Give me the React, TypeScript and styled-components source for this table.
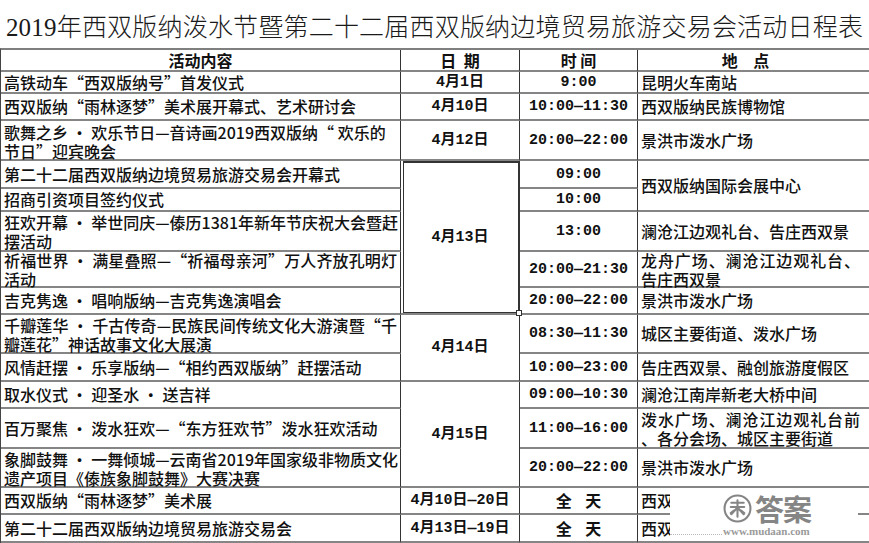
import React from "react";
import styled, { createGlobalStyle } from "styled-components";

const Global = createGlobalStyle`
  html, body { margin: 0; padding: 0; background: #fff; }
  body { width: 869px; height: 543px; overflow: hidden; }
`;

const Page = styled.div`
  position: relative;
  width: 869px;
  height: 543px;
  overflow: hidden;
  background: #fff;
  color: #111;
  font-family: "Noto Sans CJK SC", sans-serif;
`;

const Title = styled.h1`
  margin: 0;
  height: 48px;
  display: flex;
  align-items: center;
  justify-content: center;
  font-family: "Liberation Serif", "Noto Sans CJK SC", serif;
  font-weight: 300;
  font-size: 25px;
  letter-spacing: 0.2px;
  color: #1a1a1a;
  white-space: nowrap;
  padding-top: 1px;
  box-sizing: border-box;
`;

const Grid = styled.div`
  display: grid;
  grid-template-columns: 400px 119px 118px 240px;
  grid-template-rows: 22px 22px 27px 40px 28px 23px 40px 36px 27px 39px 28px 27px 40px 39px 27px 28px;
  border-top: 2px solid #7f7f7f;
  border-left: 1px solid #444;
  width: 878px;
`;

type CellProps = {
  $row: string;
  $col: number;
  $center?: boolean;
  $mono?: boolean;
  $pad?: number;
  $pr?: number;
};

const Cell = styled.div<CellProps>`
  grid-row: ${(p) => p.$row};
  grid-column: ${(p) => p.$col};
  box-sizing: border-box;
  border-right: 1px solid #333;
  border-bottom: 2px solid #858585;
  display: flex;
  flex-direction: column;
  justify-content: center;
  align-items: ${(p) => (p.$center ? "center" : "stretch")};
  padding: ${(p) => p.$pad ?? 0}px ${(p) => p.$pr ?? 3}px 0 3px;
  white-space: nowrap;
  font-size: ${(p) => (p.$mono ? "15px" : "16px")};
  line-height: 19px;
  font-weight: ${(p) => (p.$mono ? 700 : 500)};
  font-family: ${(p) =>
    p.$mono
      ? '"Liberation Mono", "Noto Sans CJK SC", monospace'
      : '"Noto Sans CJK SC", sans-serif'};
`;

const Selected = styled(Cell)`
  position: relative;
  box-shadow: inset 2px 0 0 #fff, inset 3px 0 0 #333, inset 0 -1px 0 #333,
    inset -1px 0 0 #333, inset 0 2px 0 #333;
  &::after {
    content: "";
    position: absolute;
    right: -3px;
    bottom: -3px;
    width: 4px;
    height: 4px;
    background: #fff;
    border: 1px solid #333;
    z-index: 2;
  }
`;

const Line = styled.span<{ $spread?: boolean }>`
  display: block;
  text-align: ${(p) => (p.$spread ? "justify" : "left")};
  text-align-last: ${(p) => (p.$spread ? "justify" : "auto")};
`;

const HeadText = styled.span<{ $gap: number; $shift?: number }>`
  font-weight: 700;
  word-spacing: ${(p) => p.$gap}px;
  margin-right: ${(p) => p.$shift ?? 0}px;
`;

const Watermark = styled.div`
  position: absolute;
  left: 670px;
  top: 488px;
  width: 188px;
  height: 53px;
  background: #fff;
  box-sizing: border-box;
  padding: 4px 0 0 53px;
  display: flex;
  flex-direction: column;
  align-items: flex-start;
`;

const MarkTop = styled.div`
  display: flex;
  align-items: center;
  gap: 3px;
  height: 33px;
`;

const MarkWord = styled.span`
  font-family: "Noto Sans CJK SC", sans-serif;
  font-weight: 700;
  font-size: 29px;
  line-height: 33px;
  letter-spacing: -1px;
  color: #858585;
`;

const MarkUrl = styled.span`
  font-family: "Liberation Serif", serif;
  font-weight: 700;
  font-size: 11px;
  line-height: 12px;
  color: #9a9a9a;
  margin-top: 0;
`;

const Dots = styled.div`
  position: absolute;
  left: 0;
  bottom: 6px;
  width: 52px;
  border-bottom: 1px dotted #bbb;
`;

function Logo() {
  return (
    <svg width="29" height="29" viewBox="0 0 28 28">
      <circle cx="14" cy="14" r="12.5" fill="none" stroke="#858585" strokeWidth="2" />
      <path
        d="M8 8.5 H20 M14 6 V22 M7.5 12.5 H20.5 M14 13 L8 19.5 M14 13 L20 19.5 M10.5 16 L7.5 18.5 M17.5 16 L20.5 18.5"
        stroke="#858585"
        strokeWidth="2"
        fill="none"
        strokeLinecap="round"
      />
    </svg>
  );
}

export default function App() {
  return (
    <Page>
      <Global />
      <Title>2019年西双版纳泼水节暨第二十二届西双版纳边境贸易旅游交易会活动日程表</Title>
      <Grid>
        <Cell $row="1" $col={1} $center><HeadText $gap={0}>活动内容</HeadText></Cell>
        <Cell $row="1" $col={2} $center><HeadText $gap={4}>日 期</HeadText></Cell>
        <Cell $row="1" $col={3} $center><HeadText $gap={0}>时 间</HeadText></Cell>
        <Cell $row="1" $col={4} $center><HeadText $gap={12} $shift={24}>地 点</HeadText></Cell>

        <Cell $row="2" $col={1}>高铁动车“西双版纳号”首发仪式</Cell>
        <Cell $row="2" $col={2} $center $mono>4月1日</Cell>
        <Cell $row="2" $col={3} $center $mono>9:00</Cell>
        <Cell $row="2" $col={4}>昆明火车南站</Cell>

        <Cell $row="3" $col={1}>西双版纳“雨林逐梦”美术展开幕式、艺术研讨会</Cell>
        <Cell $row="3" $col={2} $center $mono>4月10日</Cell>
        <Cell $row="3" $col={3} $center $mono>10:00—11:30</Cell>
        <Cell $row="3" $col={4}>西双版纳民族博物馆</Cell>

        <Cell $row="4" $col={1} $pad={3}>
          <Line>歌舞之乡 ・ 欢乐节日—音诗画2019西双版纳“ 欢乐的</Line>
          <Line>节日”迎宾晚会</Line>
        </Cell>
        <Cell $row="4" $col={2} $center $mono>4月12日</Cell>
        <Cell $row="4" $col={3} $center $mono>20:00—22:00</Cell>
        <Cell $row="4" $col={4}>景洪市泼水广场</Cell>

        <Cell $row="5" $col={1}>第二十二届西双版纳边境贸易旅游交易会开幕式</Cell>
        <Selected $row="5 / span 5" $col={2} $center $mono>4月13日</Selected>
        <Cell $row="5" $col={3} $center $mono>09:00</Cell>
        <Cell $row="5 / span 2" $col={4}>西双版纳国际会展中心</Cell>

        <Cell $row="6" $col={1}>招商引资项目签约仪式</Cell>
        <Cell $row="6" $col={3} $center $mono>10:00</Cell>

        <Cell $row="7" $col={1} $pad={2}>
          <Line $spread>狂欢开幕 ・ 举世同庆—傣历1381年新年节庆祝大会暨赶</Line>
          <Line>摆活动</Line>
        </Cell>
        <Cell $row="7" $col={3} $center $mono>13:00</Cell>
        <Cell $row="7" $col={4}>澜沧江边观礼台、告庄西双景</Cell>

        <Cell $row="8" $col={1} $pad={2}>
          <Line $spread>祈福世界 ・ 满星叠照—“祈福母亲河”万人齐放孔明灯</Line>
          <Line>活动</Line>
        </Cell>
        <Cell $row="8" $col={3} $center $mono>20:00—21:30</Cell>
        <Cell $row="8" $col={4} $pad={2} $pr={17}>
          <Line $spread>龙舟广场、澜沧江边观礼台、</Line>
          <Line>告庄西双景</Line>
        </Cell>

        <Cell $row="9" $col={1}>吉克隽逸 ・ 唱响版纳—吉克隽逸演唱会</Cell>
        <Cell $row="9" $col={3} $center $mono>20:00—22:00</Cell>
        <Cell $row="9" $col={4}>景洪市泼水广场</Cell>

        <Cell $row="10" $col={1} $pad={2}>
          <Line $spread>千瓣莲华 ・ 千古传奇—民族民间传统文化大游演暨“千</Line>
          <Line>瓣莲花”神话故事文化大展演</Line>
        </Cell>
        <Cell $row="10 / span 2" $col={2} $center $mono>4月14日</Cell>
        <Cell $row="10" $col={3} $center $mono>08:30—11:30</Cell>
        <Cell $row="10" $col={4}>城区主要街道、泼水广场</Cell>

        <Cell $row="11" $col={1}>风情赶摆 ・ 乐享版纳—“相约西双版纳”赶摆活动</Cell>
        <Cell $row="11" $col={3} $center $mono>10:00—23:00</Cell>
        <Cell $row="11" $col={4}>告庄西双景、融创旅游度假区</Cell>

        <Cell $row="12" $col={1}>取水仪式 ・ 迎圣水 ・ 送吉祥</Cell>
        <Cell $row="12 / span 3" $col={2} $center $mono>4月15日</Cell>
        <Cell $row="12" $col={3} $center $mono>09:00—10:30</Cell>
        <Cell $row="12" $col={4}>澜沧江南岸新老大桥中间</Cell>

        <Cell $row="13" $col={1}>百万聚焦 ・ 泼水狂欢—“东方狂欢节”泼水狂欢活动</Cell>
        <Cell $row="13" $col={3} $center $mono>11:00—16:00</Cell>
        <Cell $row="13" $col={4} $pad={2} $pr={17}>
          <Line $spread>泼水广场、澜沧江边观礼台前</Line>
          <Line>、各分会场、城区主要街道</Line>
        </Cell>

        <Cell $row="14" $col={1} $pad={2}>
          <Line>象脚鼓舞 ・ 一舞倾城—云南省2019年国家级非物质文化</Line>
          <Line>遗产项目《傣族象脚鼓舞》大赛决赛</Line>
        </Cell>
        <Cell $row="14" $col={3} $center $mono>20:00—22:00</Cell>
        <Cell $row="14" $col={4}>景洪市泼水广场</Cell>

        <Cell $row="15" $col={1}>西双版纳“雨林逐梦”美术展</Cell>
        <Cell $row="15" $col={2} $center $mono>4月10日—20日</Cell>
        <Cell $row="15" $col={3} $center><HeadText $gap={10}>全 天</HeadText></Cell>
        <Cell $row="15" $col={4}>西双版纳民族博物馆</Cell>

        <Cell $row="16" $col={1}>第二十二届西双版纳边境贸易旅游交易会</Cell>
        <Cell $row="16" $col={2} $center $mono>4月13日—19日</Cell>
        <Cell $row="16" $col={3} $center><HeadText $gap={10}>全 天</HeadText></Cell>
        <Cell $row="16" $col={4}>西双版纳国际会展中心</Cell>
      </Grid>
      <Watermark>
        <Dots />
        <MarkTop>
          <Logo />
          <MarkWord>答案</MarkWord>
        </MarkTop>
        <MarkUrl>www.mudaan.com</MarkUrl>
      </Watermark>
    </Page>
  );
}
